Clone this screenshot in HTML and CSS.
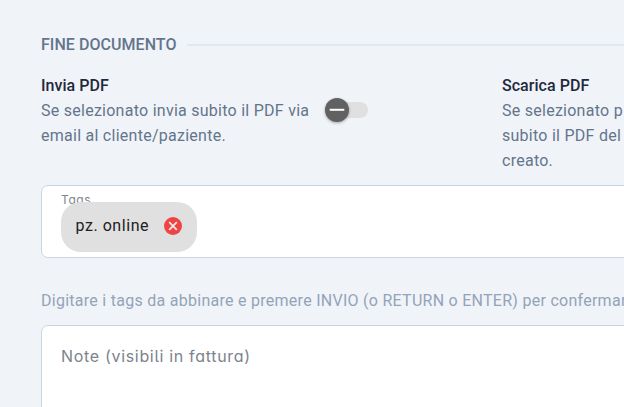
FILE: index.html
```html
<!DOCTYPE html>
<html lang="it">
<head>
<meta charset="utf-8">
<title>Fine documento</title>
<link rel="stylesheet" href="styles.css">
</head>
<body>
<main class="page">
  <header class="section-header"><h2 class="section-title">FINE DOCUMENTO</h2><div class="divider"></div></header>
  <section class="options">
    <div class="option">
      <div class="option-text">
        <h3 class="option-title">Invia PDF</h3>
        <p class="option-copy">Se selezionato invia subito il PDF via<br>email al cliente/paziente.</p>
      </div>
      <button class="toggle" role="switch" aria-checked="false">
        <span class="thumb"><svg class="thumb-icon" viewBox="0 0 24 24"><path d="M4.7 11.8H19.3"/></svg></span>
      </button>
    </div>
    <div class="option">
      <div class="option-text">
        <h3 class="option-title">Scarica PDF</h3>
        <p class="option-copy">Se selezionato p<br>subito il PDF del<br>creato.</p>
      </div>
    </div>
  </section>
  <div class="field tags-field">
    <span class="field-label">Tags</span>
    <div class="chip">
      <span class="chip-text">pz. online</span>
      <svg class="chip-remove" viewBox="0 0 18 18"><circle cx="9" cy="9" r="9"/><path d="M5.2 5.2L12.8 12.8M12.8 5.2L5.2 12.8"/></svg>
    </div>
  </div>
  <p class="hint">Digitare i tags da abbinare e premere INVIO (o RETURN o ENTER) per confermare</p>
  <div class="field notes-field"><span class="placeholder">Note (visibili in fattura)</span></div>
</main>
</body>
</html>
```
FILE: styles.css
```css
* { box-sizing: border-box; }
html, body { margin: 0; height: 407px; overflow: hidden; }
body { background: #f0f4f9; font: 400 16px/25px Roboto, sans-serif; }
.page { width: 964px; height: 407px; padding: 32px 0 0 41px; overflow: hidden; }
h2, h3, p { margin: 0; }
.section-header { display: flex; align-items: center; height: 25px; gap: 10px; }
.section-title { font-size: 16px; font-weight: 500; letter-spacing: .05px; color: #64748b; }
.divider { flex: 1; height: 2px; background: #e2e8f0; }
.options { display: grid; grid-template-columns: 461px 1fr; margin-top: 16px; height: 112px; }
.option { display: flex; align-items: flex-start; gap: 16px; white-space: nowrap; }
.option-title { font-size: 16px; font-weight: 500; letter-spacing: .04px; color: #1e293b; }
.option-copy { color: #64748b; letter-spacing: .26px; }
.toggle { display: flex; align-items: center; width: 43px; height: 16px; margin: 29px 0 0; padding: 0; border: 0; border-radius: 8px; background: #e0e0e0; }
.thumb { display: grid; place-items: center; width: 24px; height: 24px; border-radius: 50%; background: #616161; box-shadow: 0 1px 3px #0005; }
.thumb-icon { width: 24px; height: 24px; fill: none; stroke: #fff; stroke-width: 2; }
.field { border: 1px solid #cbd5e1; border-radius: 7px; background: #fff; padding-left: 19px; }
.tags-field { height: 73px; padding-top: 6px; }
.field-label, .placeholder { display: block; font-family: Inter, sans-serif; font-feature-settings: "cv05", "cv11"; color: #7d838d; white-space: nowrap; }
.field-label { height: 10px; font-size: 12px; line-height: 15px; letter-spacing: .6px; }
.chip { position: relative; display: flex; align-items: center; width: 136px; height: 50px; padding: 0 15px 2px 14.5px; border-radius: 20px; background: #e0e0e0; justify-content: space-between; }
.chip-text { padding-bottom: 2px; color: #212121; letter-spacing: .55px; }
.chip-remove { width: 18px; height: 18px; fill: #f04444; }
.chip-remove path { fill: none; stroke: #e8e8e8; stroke-width: 1.8; }
.hint { margin-top: 30px; color: #94a3b8; letter-spacing: .27px; white-space: nowrap; }
.notes-field { height: 120px; margin-top: 12px; padding-top: 18px; }
.placeholder { font-size: 16px; letter-spacing: .68px; }
```
